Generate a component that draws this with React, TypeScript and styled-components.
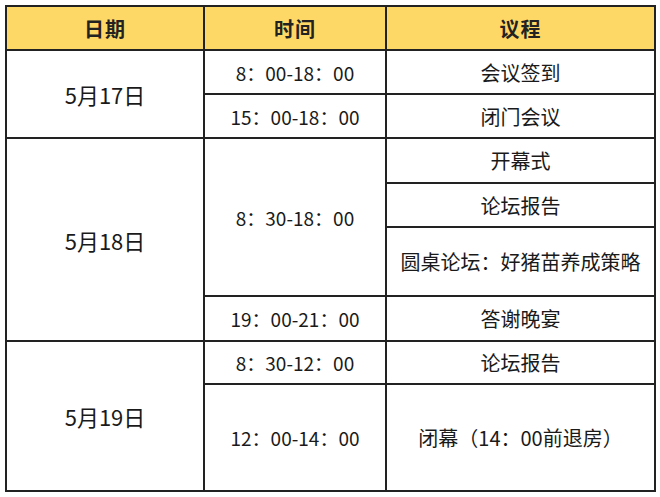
import React from "react";
import styled, { createGlobalStyle } from "styled-components";

const GlobalStyle = createGlobalStyle`
  html, body {
    margin: 0;
    padding: 0;
    background: #ffffff;
  }
  body {
    font-family: "Noto Sans CJK SC", "Noto Sans", sans-serif;
    color: #1a1a1a;
  }
`;

const Page = styled.div`
  width: 660px;
  height: 497px;
  padding: 5px 0 0 5px;
  box-sizing: border-box;
  background: #ffffff;
`;

const Table = styled.table`
  border-collapse: collapse;
  table-layout: fixed;
  width: 649px;
`;

const HeadCell = styled.th`
  height: 42px;
  padding: 0;
  background: #fdd866;
  border: 2px solid #222;
  font-size: 20px;
  font-weight: 700;
  color: #222;
  text-align: center;
  vertical-align: middle;
  letter-spacing: 1px;
`;

const Cell = styled.td<{ $size?: number; $h: number }>`
  height: ${(p) => p.$h - 2}px;
  padding: 0;
  border: 2px solid #222;
  font-size: ${(p) => p.$size ?? 20}px;
  text-align: center;
  vertical-align: middle;
  white-space: nowrap;
`;

type Slot = { time: string; span: number; items: { text: string; h: number }[] };
type Day = { date: string; slots: Slot[] };

const days: Day[] = [
  {
    date: "5月17日",
    slots: [
      { time: "8：00-18：00", span: 1, items: [{ text: "会议签到", h: 44 }] },
      { time: "15：00-18：00", span: 1, items: [{ text: "闭门会议", h: 44 }] },
    ],
  },
  {
    date: "5月18日",
    slots: [
      {
        time: "8：30-18：00",
        span: 3,
        items: [
          { text: "开幕式", h: 45 },
          { text: "论坛报告", h: 44 },
          { text: "圆桌论坛：好猪苗养成策略", h: 69 },
        ],
      },
      { time: "19：00-21：00", span: 1, items: [{ text: "答谢晚宴", h: 45 }] },
    ],
  },
  {
    date: "5月19日",
    slots: [
      { time: "8：30-12：00", span: 1, items: [{ text: "论坛报告", h: 43 }] },
      { time: "12：00-14：00", span: 1, items: [{ text: "闭幕（14：00前退房）", h: 107 }] },
    ],
  },
];

export default function App() {
  return (
    <Page>
      <GlobalStyle />
      <Table>
        <colgroup>
          <col style={{ width: 198 }} />
          <col style={{ width: 182 }} />
          <col style={{ width: 269 }} />
        </colgroup>
        <thead>
          <tr>
            <HeadCell>日期</HeadCell>
            <HeadCell>时间</HeadCell>
            <HeadCell>议程</HeadCell>
          </tr>
        </thead>
        <tbody>
          {days.map((day) => {
            const rows = day.slots.flatMap((s) => s.items.map((it, i) => ({ slot: s, item: it, first: i === 0 })));
            return rows.map((r, idx) => (
              <tr key={day.date + idx}>
                {idx === 0 && (
                  <Cell rowSpan={rows.length} $size={22} $h={r.item.h}>
                    {day.date}
                  </Cell>
                )}
                {r.first && (
                  <Cell rowSpan={r.slot.span} $size={19} $h={r.item.h}>
                    {r.slot.time}
                  </Cell>
                )}
                <Cell $h={r.item.h}>{r.item.text}</Cell>
              </tr>
            ));
          })}
        </tbody>
      </Table>
    </Page>
  );
}
